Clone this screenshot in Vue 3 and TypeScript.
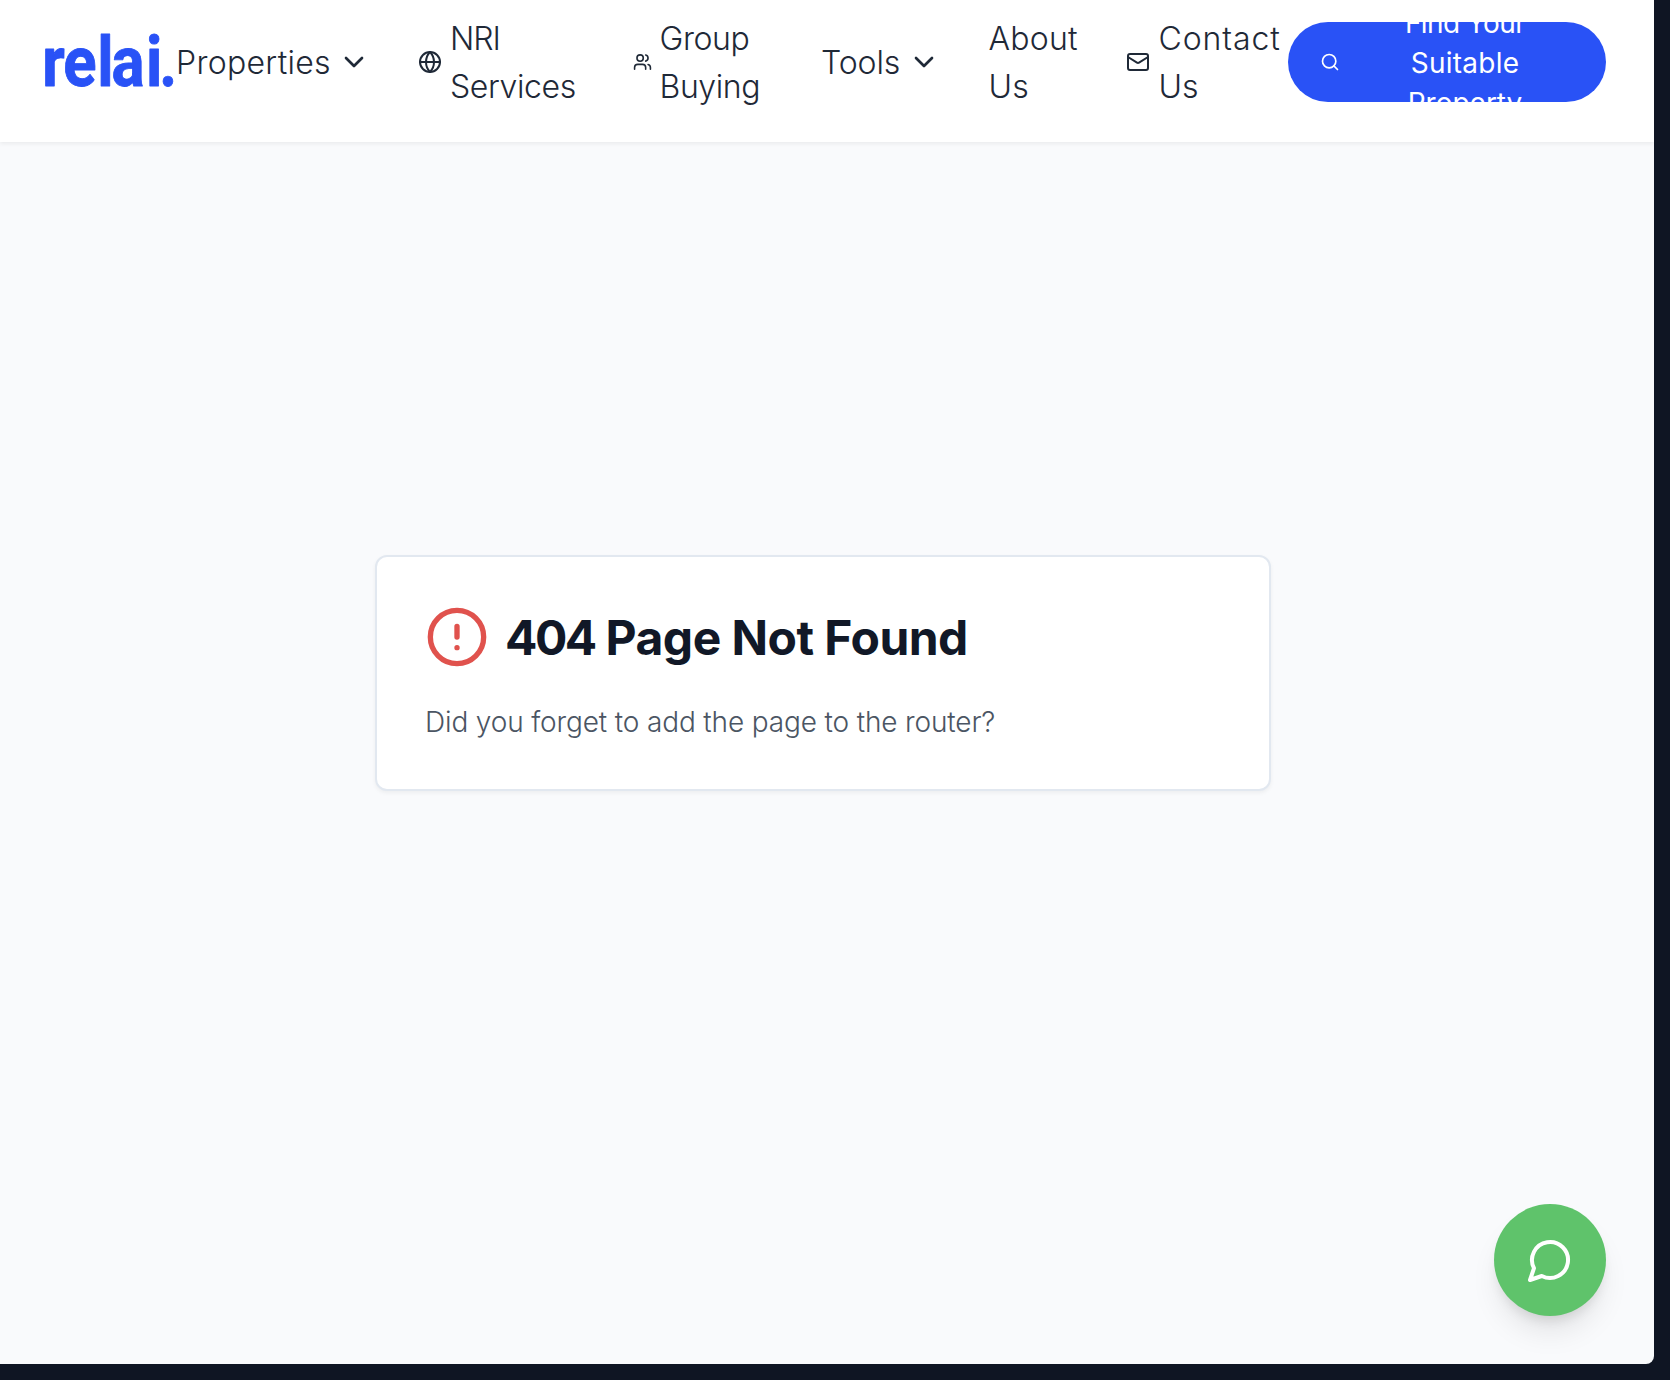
<script setup lang="ts">
interface NavItem {
  id: string
  lines: string[]
  icon?: 'globe' | 'users' | 'mail'
  menu?: boolean
}

const items: NavItem[] = [
  { id: 'properties', lines: ['Properties'], menu: true },
  { id: 'nri', lines: ['NRI', 'Services'], icon: 'globe' },
  { id: 'group', lines: ['Group', 'Buying'], icon: 'users' },
  { id: 'tools', lines: ['Tools'], menu: true },
  { id: 'about', lines: ['About', 'Us'] },
  { id: 'contact', lines: ['Contact', 'Us'], icon: 'mail' },
]
const buttonLines = ['Find Your', 'Suitable', 'Property']
</script>

<template>
  <div class="frame">
    <div class="page">
      <header class="header">
        <svg class="logo" width="136" height="70" viewBox="0 0 136 70">
          <text transform="translate(0 58.5) scale(0.88 1)" x="2.6 26.4 65 81.2 120.4 135.6" y="0">relai.</text>
        </svg>
        <nav class="nav">
          <a v-for="item in items" :key="item.id" class="item" :class="item.id">
            <svg v-if="item.icon" class="icon" viewBox="0 0 24 24">
              <template v-if="item.icon === 'globe'">
                <circle cx="12" cy="12" r="10" />
                <path d="M12 2a14.5 14.5 0 0 0 0 20 14.5 14.5 0 0 0 0-20M2 12h20" />
              </template>
              <template v-else-if="item.icon === 'users'">
                <path d="M16 21v-2a4 4 0 0 0-4-4H6a4 4 0 0 0-4 4v2" />
                <circle cx="9" cy="7" r="4" />
                <path d="M22 21v-2a4 4 0 0 0-3-3.87M16 3.13a4 4 0 0 1 0 7.75" />
              </template>
              <template v-else>
                <rect x="2" y="4" width="20" height="16" rx="2" />
                <path d="m22 7-8.97 5.7a1.94 1.94 0 0 1-2.06 0L2 7" />
              </template>
            </svg>
            <span class="label">
              <span v-for="(line, i) in item.lines" :key="line" class="line" :class="'l' + i">{{ line }}</span>
            </span>
            <svg v-if="item.menu" class="chevron" viewBox="0 0 24 24"><path d="m6 9 6 6 6-6" /></svg>
          </a>
        </nav>
        <button class="cta">
          <svg class="search" viewBox="0 0 24 24"><circle cx="11" cy="11" r="8" /><path d="m21 21-4.3-4.3" /></svg>
          <span class="cta-text">
            <span v-for="(line, i) in buttonLines" :key="line" class="cta-line" :class="'c' + i">{{ line }}</span>
          </span>
        </button>
      </header>

      <main class="main">
        <section class="card">
          <div class="heading">
            <svg class="alert" viewBox="0 0 24 24">
              <circle cx="12" cy="12" r="10" />
              <path d="M12 8v4M12 16h.01" />
            </svg>
            <h1><span class="code">404</span> Page Not Found</h1>
          </div>
          <p>Did you forget to add the page to the router?</p>
        </section>
      </main>

      <button class="chat">
        <svg viewBox="0 0 24 24"><path d="M7.9 20A9 9 0 1 0 4 16.1L2 22Z" /></svg>
      </button>
    </div>
  </div>
</template>

<style>
body {
  margin: 0;
  background: #0f1523;
}
</style>

<style scoped>
.frame {
  width: 1670px;
  height: 1380px;
  overflow: hidden;
  background: #0f1523;
  font-family: Inter, 'Noto Sans', sans-serif;
}
.page {
  position: relative;
  width: 1654px;
  height: 1364px;
  display: flex;
  flex-direction: column;
  overflow: hidden;
  border-radius: 0 0 8px 0;
  background: #f9fafc;
}
svg {
  flex: none;
  fill: none;
  stroke: currentColor;
  stroke-width: 2;
  stroke-linecap: round;
  stroke-linejoin: round;
}
.header {
  flex: none;
  box-sizing: border-box;
  height: 142px;
  padding: 22px 48px 40px 40px;
  display: flex;
  align-items: center;
  background: #fff;
  box-shadow: 0 2px 4px rgba(0, 0, 0, 0.06);
}
.logo {
  overflow: visible;
}
.logo text {
  font: 700 70px Roboto, sans-serif;
  fill: #2952f6;
  stroke: #2952f6;
  stroke-width: 0.9px;
}
.nav {
  width: 1112px;
  display: flex;
  align-items: center;
  color: #1f2937;
}
.item {
  flex: none;
  display: flex;
  align-items: center;
  box-sizing: border-box;
  font-size: 32px;
  font-weight: 350;
  line-height: 48px;
}
.label {
  padding-top: 2px;
}
.line {
  display: block;
  width: max-content;
}
.icon {
  width: 24px;
  height: 24px;
  margin-right: 8px;
}
.chevron {
  width: 32px;
  height: 32px;
  margin-left: auto;
}
.properties {
  width: 194px;
  margin-right: 48px;
  letter-spacing: 0.3px;
}
.nri {
  width: 214.5px;
  letter-spacing: -0.4px;
}
.nri .l0 {
  letter-spacing: -1.1px;
}
.group {
  width: 188.5px;
  letter-spacing: -0.4px;
}
.group .icon {
  width: 19px;
}
.tools {
  width: 118.5px;
  margin-right: 49px;
  letter-spacing: -0.1px;
}
.about {
  width: 137.5px;
  letter-spacing: 0.2px;
}
.contact .icon {
  margin-right: 8.5px;
}
.contact .l0 {
  letter-spacing: 0.9px;
}
.cta {
  flex: none;
  box-sizing: border-box;
  width: 318px;
  height: 80px;
  padding: 0 32px;
  border: 0;
  border-radius: 40px;
  overflow: hidden;
  display: flex;
  align-items: center;
  color: #fff;
  background: #2952f6;
  font-family: inherit;
  font-size: 28px;
  font-weight: 400;
  line-height: 40px;
}
.search {
  width: 20px;
  height: 20px;
}
.cta-text {
  flex: 1;
  margin-left: 16px;
  padding-top: 2px;
  text-align: center;
}
.cta-line {
  display: block;
}
.c0 {
  letter-spacing: -0.6px;
}
.c1 {
  letter-spacing: 0.25px;
}
.main {
  flex: 1;
  display: flex;
  padding: 413px 0 0 375px;
}
.card {
  box-sizing: border-box;
  width: 896px;
  height: 236px;
  padding: 48px;
  border: 2px solid #e2e8f0;
  border-radius: 12px;
  background: #fff;
  box-shadow: 0 2px 4px rgba(0, 0, 0, 0.05);
}
.heading {
  display: flex;
  align-items: center;
  height: 64px;
}
.alert {
  width: 64px;
  height: 64px;
  color: #e0524d;
}
h1 {
  margin: 2px 0 0 16px;
  font-size: 48px;
  font-weight: 650;
  line-height: 64px;
  letter-spacing: -0.55px;
  color: #111827;
  white-space: nowrap;
}
.code {
  letter-spacing: -2.5px;
}
p {
  margin: 33px 0 0;
  font-size: 28px;
  font-weight: 340;
  line-height: 40px;
  letter-spacing: -0.14px;
  color: #4b5563;
  white-space: nowrap;
}
.chat {
  position: absolute;
  right: 48px;
  bottom: 46px;
  bottom: 48px;
  width: 112px;
  height: 112px;
  padding: 0;
  border: 0;
  border-radius: 50%;
  display: flex;
  align-items: center;
  justify-content: center;
  color: #fff;
  background: #5fc36b;
  box-shadow: 0 20px 30px -6px rgba(0, 0, 0, 0.1), 0 8px 12px -4px rgba(0, 0, 0, 0.1);
}
.chat svg {
  width: 48px;
  height: 48px;
}
</style>
